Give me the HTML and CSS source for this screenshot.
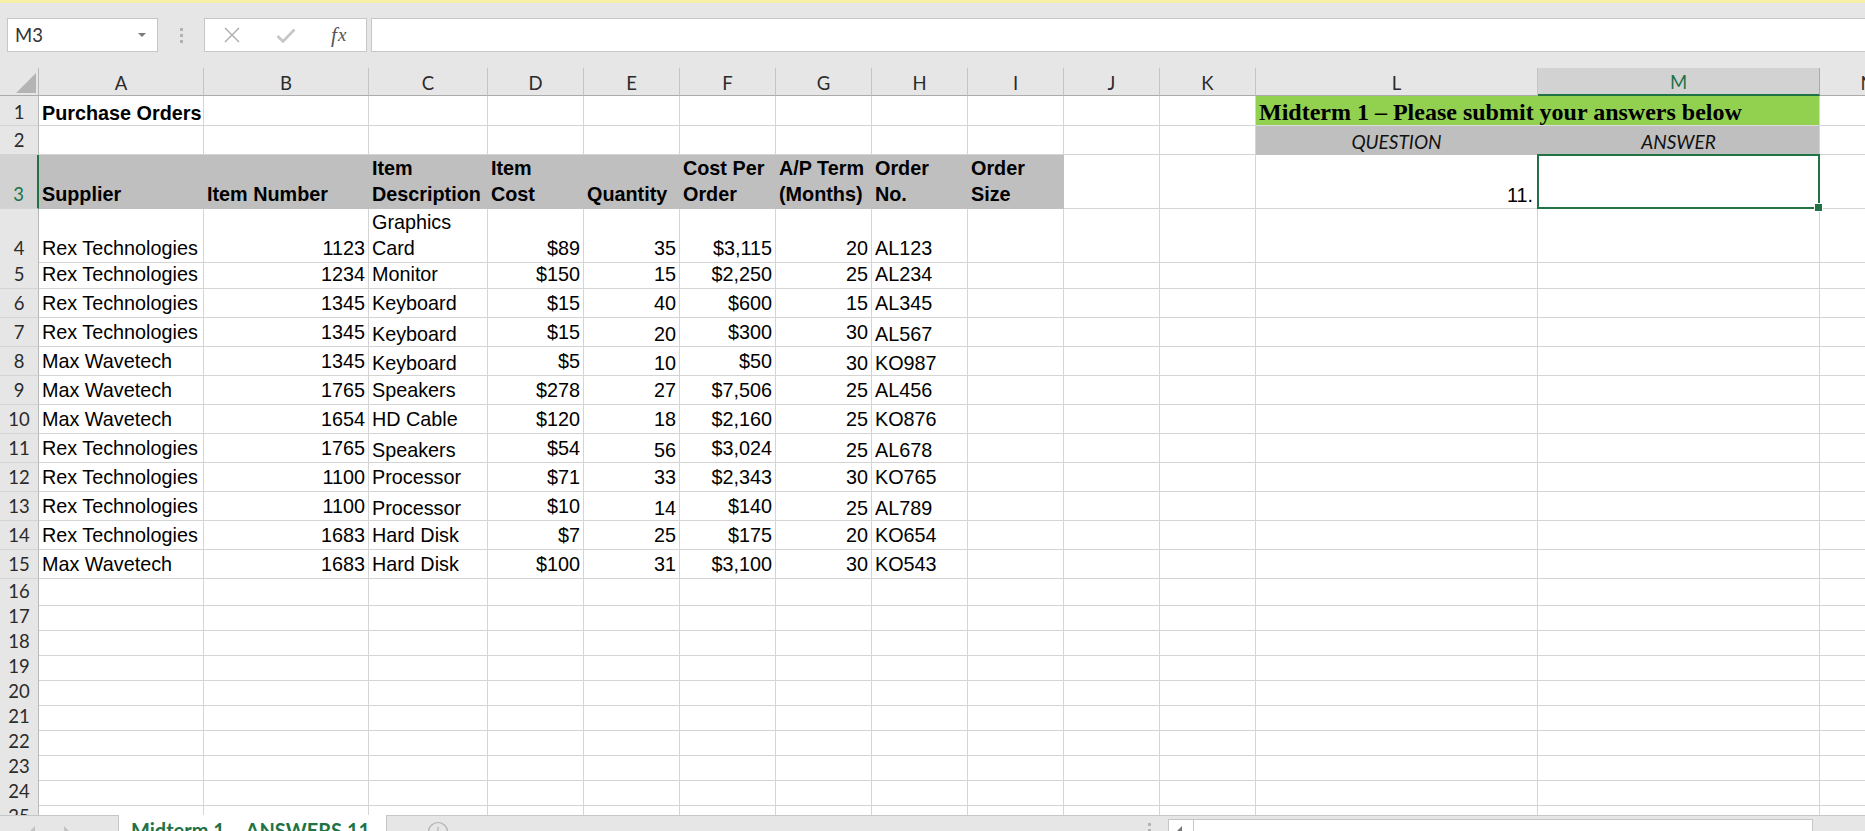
FILE: index.html
```html
<!DOCTYPE html>
<html lang="en">
<head>
<meta charset="utf-8">
<title>Midterm 1 – ANSWERS 11</title>
<link rel="stylesheet" href="styles.css">
</head>
<body>
<div class="infobar"></div>
<div class="fbar">
  <div class="namebox"><span>M3</span><span class="dd"></span></div>
  <div class="grip"><i></i><i></i><i></i></div>
  <div class="fxbox">
    <span class="slot"><svg width="18" height="16" viewBox="0 0 18 16"><path d="M2 1 L16 15 M16 1 L2 15" stroke="#ababab" stroke-width="1.4" fill="none"/></svg></span>
    <span class="slot"><svg width="20" height="15" viewBox="0 0 20 15"><path d="M1.5 8 L7 13.5 L18.5 1.5" stroke="#c6c6c6" stroke-width="2.6" fill="none"/></svg></span>
    <span class="slot fx">f<span class="fxx">x</span></span>
  </div>
  <div class="formula"></div>
</div>

<div class="sheet">
  <div class="row hdr">
    <div class="corner"><svg width="38" height="27" viewBox="0 0 38 27"><polygon points="16,25 36,25 36,5" fill="#b4b4b4"/></svg></div>
    <div class="ch">A</div><div class="ch">B</div><div class="ch">C</div><div class="ch">D</div><div class="ch">E</div><div class="ch">F</div><div class="ch">G</div><div class="ch">H</div><div class="ch">I</div><div class="ch">J</div><div class="ch">K</div><div class="ch">L</div><div class="ch sel">M</div><div class="ch">N</div>
  </div>

  <div class="row h30 r1">
    <div class="rh">1</div><div class="c b">Purchase Orders</div><div class="c"></div><div class="c"></div><div class="c"></div><div class="c"></div><div class="c"></div><div class="c"></div><div class="c"></div><div class="c"></div><div class="c"></div><div class="c"></div>
    <div class="c title">Midterm 1 – Please submit your answers below</div><div class="c"></div>
  </div>

  <div class="row h29">
    <div class="rh">2</div><div class="c"></div><div class="c"></div><div class="c"></div><div class="c"></div><div class="c"></div><div class="c"></div><div class="c"></div><div class="c"></div><div class="c"></div><div class="c"></div><div class="c"></div>
    <div class="c qa">QUESTION</div><div class="c qa qa-end">ANSWER</div><div class="c"></div>
  </div>

  <div class="row h54">
    <div class="rh sel">3</div>
    <div class="c g b">Supplier</div>
    <div class="c g b">Item Number</div>
    <div class="c g b"><span>Item<br>Description</span></div>
    <div class="c g b"><span>Item<br>Cost</span></div>
    <div class="c g b">Quantity</div>
    <div class="c g b"><span>Cost Per<br>Order</span></div>
    <div class="c g b"><span>A/P Term<br>(Months)</span></div>
    <div class="c g b"><span>Order<br>No.</span></div>
    <div class="c g b"><span>Order<br>Size</span></div>
    <div class="c"></div><div class="c"></div>
    <div class="c r num">11.</div>
    <div class="c cur"></div>
    <div class="c"></div>
  </div>

  <div class="row h51">
    <div class="rh">4</div><div class="c">Rex Technologies</div><div class="c r">1123</div><div class="c"><span>Graphics<br>Card</span></div><div class="c r">$89</div><div class="c r">35</div><div class="c r">$3,115</div><div class="c r">20</div><div class="c">AL123</div><div class="c"></div><div class="c"></div><div class="c"></div><div class="c"></div><div class="c"></div><div class="c"></div>
  </div>
  <div class="row h29">
    <div class="rh">5</div><div class="c">Rex Technologies</div><div class="c r">1234</div><div class="c">Monitor</div><div class="c r">$150</div><div class="c r">15</div><div class="c r">$2,250</div><div class="c r">25</div><div class="c">AL234</div><div class="c"></div><div class="c"></div><div class="c"></div><div class="c"></div><div class="c"></div><div class="c"></div>
  </div>
  <div class="row h29">
    <div class="rh">6</div><div class="c">Rex Technologies</div><div class="c r">1345</div><div class="c">Keyboard</div><div class="c r">$15</div><div class="c r">40</div><div class="c r">$600</div><div class="c r">15</div><div class="c">AL345</div><div class="c"></div><div class="c"></div><div class="c"></div><div class="c"></div><div class="c"></div><div class="c"></div>
  </div>
  <div class="row h29">
    <div class="rh">7</div><div class="c">Rex Technologies</div><div class="c r">1345</div><div class="c lo">Keyboard</div><div class="c r">$15</div><div class="c r lo">20</div><div class="c r">$300</div><div class="c r">30</div><div class="c lo">AL567</div><div class="c"></div><div class="c"></div><div class="c"></div><div class="c"></div><div class="c"></div><div class="c"></div>
  </div>
  <div class="row h29">
    <div class="rh">8</div><div class="c">Max Wavetech</div><div class="c r">1345</div><div class="c lo">Keyboard</div><div class="c r">$5</div><div class="c r lo">10</div><div class="c r">$50</div><div class="c r lo">30</div><div class="c lo">KO987</div><div class="c"></div><div class="c"></div><div class="c"></div><div class="c"></div><div class="c"></div><div class="c"></div>
  </div>
  <div class="row h29">
    <div class="rh">9</div><div class="c">Max Wavetech</div><div class="c r">1765</div><div class="c">Speakers</div><div class="c r">$278</div><div class="c r">27</div><div class="c r">$7,506</div><div class="c r">25</div><div class="c">AL456</div><div class="c"></div><div class="c"></div><div class="c"></div><div class="c"></div><div class="c"></div><div class="c"></div>
  </div>
  <div class="row h29">
    <div class="rh">10</div><div class="c">Max Wavetech</div><div class="c r">1654</div><div class="c">HD Cable</div><div class="c r">$120</div><div class="c r">18</div><div class="c r">$2,160</div><div class="c r">25</div><div class="c">KO876</div><div class="c"></div><div class="c"></div><div class="c"></div><div class="c"></div><div class="c"></div><div class="c"></div>
  </div>
  <div class="row h29">
    <div class="rh">11</div><div class="c">Rex Technologies</div><div class="c r">1765</div><div class="c lo">Speakers</div><div class="c r">$54</div><div class="c r lo">56</div><div class="c r">$3,024</div><div class="c r lo">25</div><div class="c lo">AL678</div><div class="c"></div><div class="c"></div><div class="c"></div><div class="c"></div><div class="c"></div><div class="c"></div>
  </div>
  <div class="row h29">
    <div class="rh">12</div><div class="c">Rex Technologies</div><div class="c r">1100</div><div class="c">Processor</div><div class="c r">$71</div><div class="c r">33</div><div class="c r">$2,343</div><div class="c r">30</div><div class="c">KO765</div><div class="c"></div><div class="c"></div><div class="c"></div><div class="c"></div><div class="c"></div><div class="c"></div>
  </div>
  <div class="row h29">
    <div class="rh">13</div><div class="c">Rex Technologies</div><div class="c r">1100</div><div class="c lo">Processor</div><div class="c r">$10</div><div class="c r lo">14</div><div class="c r">$140</div><div class="c r lo">25</div><div class="c lo">AL789</div><div class="c"></div><div class="c"></div><div class="c"></div><div class="c"></div><div class="c"></div><div class="c"></div>
  </div>
  <div class="row h29">
    <div class="rh">14</div><div class="c">Rex Technologies</div><div class="c r">1683</div><div class="c">Hard Disk</div><div class="c r">$7</div><div class="c r">25</div><div class="c r">$175</div><div class="c r">20</div><div class="c">KO654</div><div class="c"></div><div class="c"></div><div class="c"></div><div class="c"></div><div class="c"></div><div class="c"></div>
  </div>
  <div class="row h29">
    <div class="rh">15</div><div class="c">Max Wavetech</div><div class="c r">1683</div><div class="c">Hard Disk</div><div class="c r">$100</div><div class="c r">31</div><div class="c r">$3,100</div><div class="c r">30</div><div class="c">KO543</div><div class="c"></div><div class="c"></div><div class="c"></div><div class="c"></div><div class="c"></div><div class="c"></div>
  </div>

  <div class="row h25"><div class="rh">16</div><div class="c"></div><div class="c"></div><div class="c"></div><div class="c"></div><div class="c"></div><div class="c"></div><div class="c"></div><div class="c"></div><div class="c"></div><div class="c"></div><div class="c"></div><div class="c"></div><div class="c"></div><div class="c"></div></div>
  <div class="row h25"><div class="rh">17</div><div class="c"></div><div class="c"></div><div class="c"></div><div class="c"></div><div class="c"></div><div class="c"></div><div class="c"></div><div class="c"></div><div class="c"></div><div class="c"></div><div class="c"></div><div class="c"></div><div class="c"></div><div class="c"></div></div>
  <div class="row h25"><div class="rh">18</div><div class="c"></div><div class="c"></div><div class="c"></div><div class="c"></div><div class="c"></div><div class="c"></div><div class="c"></div><div class="c"></div><div class="c"></div><div class="c"></div><div class="c"></div><div class="c"></div><div class="c"></div><div class="c"></div></div>
  <div class="row h25"><div class="rh">19</div><div class="c"></div><div class="c"></div><div class="c"></div><div class="c"></div><div class="c"></div><div class="c"></div><div class="c"></div><div class="c"></div><div class="c"></div><div class="c"></div><div class="c"></div><div class="c"></div><div class="c"></div><div class="c"></div></div>
  <div class="row h25"><div class="rh">20</div><div class="c"></div><div class="c"></div><div class="c"></div><div class="c"></div><div class="c"></div><div class="c"></div><div class="c"></div><div class="c"></div><div class="c"></div><div class="c"></div><div class="c"></div><div class="c"></div><div class="c"></div><div class="c"></div></div>
  <div class="row h25"><div class="rh">21</div><div class="c"></div><div class="c"></div><div class="c"></div><div class="c"></div><div class="c"></div><div class="c"></div><div class="c"></div><div class="c"></div><div class="c"></div><div class="c"></div><div class="c"></div><div class="c"></div><div class="c"></div><div class="c"></div></div>
  <div class="row h25"><div class="rh">22</div><div class="c"></div><div class="c"></div><div class="c"></div><div class="c"></div><div class="c"></div><div class="c"></div><div class="c"></div><div class="c"></div><div class="c"></div><div class="c"></div><div class="c"></div><div class="c"></div><div class="c"></div><div class="c"></div></div>
  <div class="row h25"><div class="rh">23</div><div class="c"></div><div class="c"></div><div class="c"></div><div class="c"></div><div class="c"></div><div class="c"></div><div class="c"></div><div class="c"></div><div class="c"></div><div class="c"></div><div class="c"></div><div class="c"></div><div class="c"></div><div class="c"></div></div>
  <div class="row h25"><div class="rh">24</div><div class="c"></div><div class="c"></div><div class="c"></div><div class="c"></div><div class="c"></div><div class="c"></div><div class="c"></div><div class="c"></div><div class="c"></div><div class="c"></div><div class="c"></div><div class="c"></div><div class="c"></div><div class="c"></div></div>
  <div class="row h25"><div class="rh">25</div><div class="c"></div><div class="c"></div><div class="c"></div><div class="c"></div><div class="c"></div><div class="c"></div><div class="c"></div><div class="c"></div><div class="c"></div><div class="c"></div><div class="c"></div><div class="c"></div><div class="c"></div><div class="c"></div></div>
</div>

<div class="tabbar">
  <div class="nav"><span class="arr-l"></span><span class="arr-r"></span></div>
  <div class="tab">Midterm 1 – ANSWERS 11</div>
  <svg class="addsheet" width="22" height="22" viewBox="0 0 22 22"><circle cx="11" cy="11" r="9.5" fill="none" stroke="#b3b3b3" stroke-width="1.2"/><path d="M11 6 V16 M6 11 H16" stroke="#b3b3b3" stroke-width="1.2"/></svg>
  <div class="spacer"></div>
  <div class="hgrip"><i></i><i></i></div>
  <div class="hscroll"><div class="lbtn"><span class="tri"></span></div><div class="track"></div></div>
</div>
</body>
</html>
```

FILE: styles.css
```css
* { box-sizing: border-box; }
html, body { margin: 0; padding: 0; }
body {
  width: 1865px;
  height: 831px;
  overflow: hidden;
  background: #e6e6e6;
  font-family: "Liberation Sans", Arial, sans-serif;
}

/* top strip + formula bar */
.infobar { height: 3px; background: #f8efa6; }
.fbar {
  display: flex;
  height: 34px;
  margin: 15px 0 16px;
  padding-left: 7px;
}
.namebox {
  width: 151px;
  background: #fff;
  border: 1px solid #c6c6c6;
  display: flex;
  align-items: center;
  justify-content: space-between;
  padding: 0 11px 0 7px;
  font: 18.5px Lato, sans-serif;
  color: #333;
}
.dd {
  width: 0; height: 0;
  border-left: 4px solid transparent;
  border-right: 4px solid transparent;
  border-top: 4px solid #7a7a7a;
}
.grip {
  width: 46px;
  display: flex;
  flex-direction: column;
  align-items: center;
  justify-content: center;
  gap: 3px;
}
.grip i, .hgrip i { display: block; width: 3px; height: 3px; background: #b3b3b3; }
.fxbox {
  width: 163px;
  background: #fff;
  border: 1px solid #c6c6c6;
  display: flex;
  align-items: center;
}
.slot { width: 54px; display: flex; justify-content: center; align-items: center; }
.slot svg { display: block; }
.fx {
  font: italic 21px "Liberation Serif", serif;
  color: #555;
  letter-spacing: 1px;
}
.fxx { font-size: 19px; }
.formula {
  flex: 1;
  margin: 0 -2px 0 4px;
  background: #fff;
  border: 1px solid #c6c6c6;
}

/* sheet grid */
.sheet { height: 747px; overflow: hidden; background: #fff; }
.row {
  display: grid;
  grid-template-columns: 39px 165px 165px 119px repeat(8, 96px) 282px 282px 96px;
}
.hdr { height: 28px; background: #e6e6e6; }
.h30 { height: 30px; }
.h29 { height: 29px; }
.h54 { height: 54px; }
.h51 { height: 51px; }
.h25 { height: 25px; }

.corner {
  border-right: 1px solid #b8b8b8;
  border-bottom: 1px solid #ababab;
}
.corner svg { display: block; }
.ch {
  border-right: 1px solid #c4c4c4;
  border-bottom: 1px solid #ababab;
  display: flex;
  align-items: flex-end;
  justify-content: center;
  font: 18.5px/24px Lato, sans-serif;
  color: #2b2b2b;
}
.ch.sel {
  background: #d2d2d2;
  color: #217346;
  border-right-color: #ababab;
  border-bottom: 2px solid #217346;
  line-height: 23px;
}
.rh {
  background: #e6e6e6;
  border-right: 1px solid #b8b8b8;
  border-bottom: 1px solid #d4d4d4;
  display: flex;
  align-items: flex-end;
  justify-content: center;
  font: 18.5px/24px Lato, sans-serif;
  color: #2b2b2b;
  padding-bottom: 2px;
}
.rh.sel {
  background: #d2d2d2;
  color: #217346;
  border-right: 2px solid #217346;
}

.c {
  border-right: 1px solid #d4d4d4;
  border-bottom: 1px solid #d4d4d4;
  display: flex;
  align-items: flex-end;
  padding: 0 3px 1px;
  font-size: 19.8px;
  line-height: 26px;
  color: #000;
  white-space: nowrap;
  min-width: 0;
}
.c > span { display: block; }
.r { justify-content: flex-end; padding-right: 3px; }
.b { font-weight: bold; }
.lo { padding-bottom: 0; line-height: 23px; }
.g { background: #bfbfbf; border-right-color: #bfbfbf; border-bottom-color: #bfbfbf; }

.r1 .rh { padding-bottom: 1px; }
.r1 .c { padding-bottom: 0; line-height: 24px; }

.title {
  grid-column: span 2;
  background: #92d050;
  border-bottom-color: #dcdcdc;
  font: bold 24px/26px "Liberation Serif", "Times New Roman", serif;
  padding: 0 3px;
}
.r1 .title { line-height: 26px; }
.qa {
  background: #bfbfbf;
  border-right-color: #bfbfbf;
  border-bottom-color: #bfbfbf;
  justify-content: center;
  font: italic 19px/24px Lato, sans-serif;
  color: #111;
  padding-bottom: 0;
}
.qa-end { border-right-color: #d4d4d4; }
.num { padding-right: 4px; line-height: 24px; padding-bottom: 1px; }

.cur { position: relative; }
.cur::before {
  content: "";
  position: absolute;
  left: -1px; top: -1px; right: -1px; bottom: -1px;
  border: 2px solid #217346;
  z-index: 2;
}
.cur::after {
  content: "";
  position: absolute;
  right: -4px; bottom: -4px;
  width: 7px; height: 7px;
  background: #217346;
  border: 1px solid #fff;
  z-index: 3;
}

/* sheet tabs */
.tabbar {
  height: 40px;
  display: flex;
  align-items: flex-start;
  border-top: 1px solid #c6c6c6;
  background: #e6e6e6;
}
.nav {
  width: 118px;
  display: flex;
  gap: 29px;
  padding: 10px 0 0 29px;
}
.arr-l, .arr-r { width: 0; height: 0; border-top: 6px solid transparent; border-bottom: 6px solid transparent; }
.arr-l { border-right: 6px solid #c3c3c3; }
.arr-r { border-left: 6px solid #c3c3c3; }
.tab {
  width: 269px;
  height: 34px;
  margin-top: -1px;
  background: #fff;
  border-left: 1px solid #c6c6c6;
  border-right: 1px solid #c6c6c6;
  padding: 3px 0 0 12px;
  font: bold 20px/24px Lato, sans-serif;
  color: #217346;
  white-space: nowrap;
}
.addsheet { display: block; margin: 5px 0 0 40px; }
.spacer { flex: 1; }
.hgrip {
  width: 10px;
  display: flex;
  flex-direction: column;
  align-items: center;
  gap: 3px;
  padding-top: 7px;
  margin-right: 14px;
}
.hscroll {
  width: 645px;
  height: 30px;
  margin: 3px 52px 0 0;
  background: #fff;
  border: 1px solid #c6c6c6;
  display: flex;
}
.lbtn {
  width: 25px;
  border-right: 1px solid #c6c6c6;
  background: #fff;
  padding: 6px 0 0 8px;
}
.tri {
  display: block;
  width: 0; height: 0;
  border-top: 5px solid transparent;
  border-bottom: 5px solid transparent;
  border-right: 5px solid #777;
}
.track { flex: 1; }
```
